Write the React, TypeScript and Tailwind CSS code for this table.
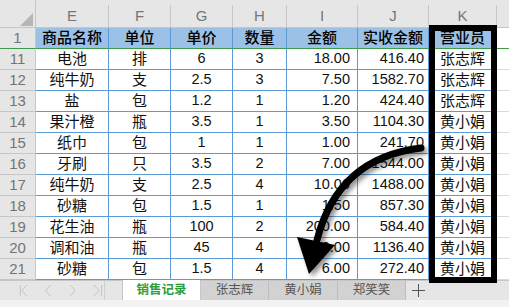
import React from "react";

const rows = [
  ["11", "电池", "排", "6", "3", "18.00", "416.40", "张志辉"],
  ["12", "纯牛奶", "支", "2.5", "3", "7.50", "1582.70", "张志辉"],
  ["13", "盐", "包", "1.2", "1", "1.20", "424.40", "张志辉"],
  ["14", "果汁橙", "瓶", "3.5", "1", "3.50", "1104.30", "黄小娟"],
  ["15", "纸巾", "包", "1", "1", "1.00", "241.70", "黄小娟"],
  ["16", "牙刷", "只", "3.5", "2", "7.00", "1544.00", "黄小娟"],
  ["17", "纯牛奶", "支", "2.5", "4", "10.00", "1488.00", "黄小娟"],
  ["18", "砂糖", "包", "1.5", "1", "1.50", "857.30", "黄小娟"],
  ["19", "花生油", "瓶", "100", "2", "200.00", "584.40", "黄小娟"],
  ["20", "调和油", "瓶", "45", "4", "180.00", "1136.40", "黄小娟"],
  ["21", "砂糖", "包", "1.5", "4", "6.00", "272.40", "黄小娟"],
];

const headers = ["商品名称", "单位", "单价", "数量", "金额", "实收金额", "营业员"];
const letters = ["E", "F", "G", "H", "I", "J", "K"];

const font = { fontFamily: '"Liberation Sans", "Noto Sans CJK SC", sans-serif' };

const cell = "h-[21px] flex items-center border-r border-b border-[#5b9bd5] bg-white text-[#111]";
const rowHead = "h-[21px] flex items-center justify-center border-r border-b border-[#c6c6c6] bg-[#e6e6e6] text-[15px] text-[#747474]";

export default function App() {
  return (
    <div className="relative w-[509px] h-[307px] overflow-hidden bg-white" style={font}>
      <div className="grid grid-cols-[36px_73px_62px_62px_54px_71px_71px_68px_1fr]">
        {/* column letters */}
        <div className="h-[28px] border-r border-b border-[#c6c6c6] bg-[#e6e6e6] relative">
          <svg className="absolute left-[20px] top-[13px]" width="13" height="13" viewBox="0 0 13 13">
            <polygon points="13,0 13,13 0,13" fill="#b6b6b6" />
          </svg>
        </div>
        {letters.map((l) => (
          <div key={l} className="h-[28px] bg-[#e6e6e6] border-b border-[#c6c6c6] flex flex-col">
            <div className="h-[12px]" />
            <div className="flex-1 flex items-center justify-center border-r border-[#c6c6c6] text-[15px] text-[#767676]">
              {l}
            </div>
          </div>
        ))}
        <div className="h-[28px] bg-[#e6e6e6] border-b border-[#c6c6c6]" />

        {/* row 1 */}
        <div className="h-[21px] flex items-center justify-center border-r border-[#c6c6c6] border-b border-b-[#3f9a4a] bg-[#e6e6e6] text-[15px] text-[#747474]">
          1
        </div>
        {headers.map((h) => (
          <div
            key={h}
            className="h-[21px] flex items-center justify-center border-r border-[#5b9bd5] border-b border-b-[#3f9a4a] bg-[#9bc2e6] text-[15px] font-medium text-black"
          >
            {h}
          </div>
        ))}
        <div className="h-[21px] border-b border-[#3f9a4a] bg-white" />

        {rows.map((r) => (
          <React.Fragment key={r[0]}>
            <div className={rowHead}>{r[0]}</div>
            <div className={`${cell} justify-center text-[15px]`}>{r[1]}</div>
            <div className={`${cell} justify-center text-[15px]`}>{r[2]}</div>
            <div className={`${cell} justify-center text-[14.5px]`}>{r[3]}</div>
            <div className={`${cell} justify-center text-[14.5px]`}>{r[4]}</div>
            <div className={`${cell} justify-end pr-[7px] text-[14.5px]`}>{r[5]}</div>
            <div className={`${cell} justify-end pr-[4px] text-[14.5px]`}>{r[6]}</div>
            <div className={`${cell} justify-center text-[15px]`}>{r[7]}</div>
            <div className="h-[21px] border-b border-[#dadada] bg-white" />
          </React.Fragment>
        ))}
      </div>

      {/* sheet tabs */}
      <div className="flex h-[20px] bg-[#e6e6e6] border-t border-[#c6c6c6]">
        <div className="w-[122px] flex items-center">
          <div className="w-[105px] h-full flex items-center border-r border-[#cfcfcf]">
            <svg width="105" height="19" viewBox="0 0 105 19" fill="none" stroke="#c4c4c4" strokeWidth="1">
              <path d="M20.5 4v11M27 4l-5 5.5 5 5.5" />
              <path d="M51 4l-5 5.5 5 5.5" />
              <path d="M71 4l5 5.5-5 5.5" />
              <path d="M95 4l5 5.5-5 5.5M102.5 4v11" />
            </svg>
          </div>
        </div>
        <div className="w-[79px] -mt-px h-[20px] bg-white border-x border-[#c6c6c6] flex items-center justify-center text-[12.5px] font-semibold text-[#2e9e3c]">
          销售记录
        </div>
        <div className="w-[68px] bg-[#d2d2d2] border-r border-[#bdbdbd] flex items-center justify-center text-[12.5px] text-[#555]">
          张志辉
        </div>
        <div className="w-[69px] bg-[#d2d2d2] border-r border-[#bdbdbd] flex items-center justify-center text-[12.5px] text-[#555]">
          黄小娟
        </div>
        <div className="w-[68px] bg-[#d2d2d2] border-r border-[#bdbdbd] flex items-center justify-center text-[12.5px] text-[#555]">
          郑笑笑
        </div>
        <div className="w-[24px] flex items-center justify-center">
          <svg width="13" height="13" viewBox="0 0 13 13" stroke="#555" strokeWidth="1">
            <path d="M6.5 0v13M0 6.5h13" />
          </svg>
        </div>
      </div>
      <div className="h-[7px] bg-[#f2f2f2]" />

      {/* annotation: box round 营业员 */}
      <div className="absolute left-[429px] top-[25px] w-[68px] h-[258px] border-[6px] border-black pointer-events-none" />

      {/* annotation: curved arrow */}
      <svg className="absolute inset-0 pointer-events-none" width="509" height="307" viewBox="0 0 509 307">
        <defs>
          <filter id="sh" x="-20%" y="-20%" width="140%" height="140%">
            <feDropShadow dx="3" dy="3" stdDeviation="2.5" floodColor="#000" floodOpacity="0.45" />
          </filter>
        </defs>
        <g filter="url(#sh)">
          <path d="M421 148 Q338 158 317 240" stroke="#000" strokeWidth="7" fill="none" strokeLinecap="round" />
          <polygon points="297,237 335,245 309,274" fill="#000" />
        </g>
      </svg>
    </div>
  );
}
